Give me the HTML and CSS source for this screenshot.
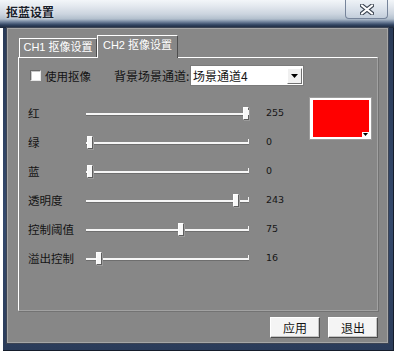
FILE: index.html
```html
<!DOCTYPE html>
<html>
<head>
<meta charset="utf-8">
<link rel="stylesheet" href="styles.css">
</head>
<body>
<div class="window">
  <div class="titlebar">
    <span class="title">抠蓝设置</span>
    <div class="close">
      <svg width="14" height="11" viewBox="0 0 14 11"><path d="M2 1.5 L12 9.5 M12 1.5 L2 9.5" stroke="#3a4350" stroke-width="4.2" stroke-linecap="round"/><path d="M2 1.5 L12 9.5 M12 1.5 L2 9.5" stroke="#ffffff" stroke-width="2.2" stroke-linecap="round"/></svg>
    </div>
  </div>
  <div class="frame">
    <div class="client">
      <div class="tabs">
        <div class="tab">CH1 抠像设置</div>
        <div class="tab active">CH2 抠像设置</div>
      </div>
      <div class="panel">
        <div class="toprow">
          <label class="check"><span class="box"></span><span>使用抠像</span></label>
          <span class="bglabel">背景场景通道:</span>
          <div class="combo">
            <span class="combo-text">场景通道4</span>
            <span class="combo-btn"><svg width="7" height="4" viewBox="0 0 7 4"><path d="M0 0 H7 L3.5 4 Z" fill="#000"/></svg></span>
          </div>
        </div>
        <div class="main">
          <div class="rows">
            <div class="row"><span class="label">红</span><div class="track"><span class="thumb" style="left:157px"></span></div><span class="val">255</span></div>
            <div class="row"><span class="label">绿</span><div class="track"><span class="thumb" style="left:1px"></span></div><span class="val">0</span></div>
            <div class="row"><span class="label">蓝</span><div class="track"><span class="thumb" style="left:1px"></span></div><span class="val">0</span></div>
            <div class="row"><span class="label">透明度</span><div class="track"><span class="thumb" style="left:147px"></span></div><span class="val">243</span></div>
            <div class="row"><span class="label">控制阈值</span><div class="track"><span class="thumb" style="left:92px"></span></div><span class="val">75</span></div>
            <div class="row"><span class="label">溢出控制</span><div class="track"><span class="thumb" style="left:10px"></span></div><span class="val">16</span></div>
          </div>
          <div class="swatch"><span class="swatch-arrow"><svg width="5" height="3" viewBox="0 0 5 3"><path d="M0 0 H5 L2.5 3 Z" fill="#000"/></svg></span></div>
        </div>
      </div>
      <div class="buttons">
        <button class="btn">应用</button>
        <button class="btn">退出</button>
      </div>
    </div>
  </div>
</div>
</body>
</html>
```

FILE: styles.css
```css
* { box-sizing: border-box; }
html, body { margin: 0; padding: 0; background: #ffffff; }
body {
  width: 400px;
  height: 356px;
  overflow: hidden;
  font-family: "Liberation Sans", "Noto Sans CJK SC", sans-serif;
  color: #141414;
}
.window {
  width: 394px;
  height: 350px;
  display: flex;
  flex-direction: column;
}
.titlebar {
  height: 28px;
  flex: none;
  display: flex;
  justify-content: space-between;
  align-items: flex-start;
  padding-left: 6px;
  padding-right: 6px;
  background: linear-gradient(to bottom, #f3f6f9 0px, #e4e9ef 6px, #ccd5df 14px, #b2bfcd 19px, #6e809a 22px, #2f4260 25px, #1c2638 28px);
}
.title {
  margin-top: 4px;
  font-family: "Noto Sans CJK SC", sans-serif;
  font-size: 12px;
  font-weight: bold;
  line-height: 16px;
  color: #18202a;
  text-shadow: 0 0 3px rgba(255,255,255,0.9);
}
.close {
  width: 43px;
  height: 19px;
  display: flex;
  align-items: center;
  justify-content: center;
  border: 1px solid #76849a;
  border-top: none;
  border-radius: 0 0 4px 4px;
  background: linear-gradient(to bottom, #eef2f6, #d6dee8 60%, #c3cedb);
}
.frame {
  flex: 1;
  margin-left: 3px;
  padding: 0 5px 7px 4px;
  background: linear-gradient(to bottom, #2a3b58, #34496c 60%, #2b3c5a);
  border-bottom: 1px solid #151d2b;
  border-right: 1px solid #151d2b;
}
.client {
  height: 315px;
  background: #878787;
  border: 1px solid #a6a6a6;
  box-shadow: 0 0 0 1px #3c4454;
  padding: 6px 10px 0 10px;
  display: flex;
  flex-direction: column;
}
.tabs {
  height: 22px;
  display: flex;
  align-items: flex-end;
  padding-left: 1px;
}
.tab {
  width: 78px;
  height: 19px;
  border: 1px solid #ffffff;
  border-bottom: none;
  border-right-color: #4e4e4e;
  color: #ffffff;
  font-size: 11px;
  line-height: 17px;
  text-align: center;
  font-family: "Liberation Sans", "Noto Sans CJK SC", sans-serif;
  white-space: nowrap;
}
.tab.active {
  width: 81px;
  height: 23px;
  margin-bottom: -1px;
  background: #878787;
  position: relative;
  z-index: 1;
  line-height: 18px;
}
.panel {
  width: 360px;
  height: 254px;
  border: 1px solid #ffffff;
  border-right-color: #a2a2a2;
  border-bottom-color: #a2a2a2;
  box-shadow: 1px 1px 0 #737373;
  padding: 7px 0 0 9px;
  font-size: 12px;
}
.toprow {
  height: 21px;
  display: flex;
  align-items: center;
}
.check {
  width: 84px;
  margin-left: 2px;
  display: flex;
  align-items: center;
  font-family: "Noto Sans CJK SC", sans-serif;
  font-size: 11.5px;
}
.box {
  width: 11px;
  height: 11px;
  margin-right: 4px;
  background: #ffffff;
  border: 1px solid #6a6a6a;
  border-right-color: #e6e6e6;
  border-bottom-color: #e6e6e6;
  box-shadow: inset 1px 1px 0 #c8c8c8;
}
.bglabel {
  width: 76px;
  font-family: "Noto Sans CJK SC", sans-serif;
  font-size: 12px;
  white-space: nowrap;
}
.combo {
  width: 114px;
  height: 21px;
  display: flex;
  align-items: center;
  justify-content: space-between;
  background: #ffffff;
  border: 1px solid #7a7a7a;
  box-shadow: inset 0 0 0 1px #ffffff;
  padding: 1px 1px 1px 2px;
}
.combo-text {
  font-family: "Noto Sans CJK SC", sans-serif;
  font-size: 12px;
  line-height: 16px;
}
.combo-btn {
  width: 15px;
  height: 16px;
  display: flex;
  align-items: center;
  justify-content: center;
  background: #f0f0f0;
  border: 1px solid #ffffff;
  border-right-color: #707070;
  border-bottom-color: #707070;
}
.main {
  margin-top: 12px;
  display: flex;
  align-items: flex-start;
}
.rows {
  width: 282px;
  display: flex;
  flex-direction: column;
}
.row {
  height: 29px;
  display: flex;
  align-items: center;
}
.label {
  width: 58px;
  font-family: "Noto Sans CJK SC", sans-serif;
  font-size: 11.5px;
  white-space: nowrap;
}
.track {
  width: 163px;
  height: 2px;
  margin-top: 2px;
  position: relative;
  background: #f6f6f6;
  box-shadow: 0 1px 0 #6e6e6e;
}
.track::after {
  content: "";
  position: absolute;
  right: 0;
  bottom: 0;
  width: 1px;
  height: 5px;
  background: #f6f6f6;
}
.thumb {
  position: absolute;
  top: -6px;
  width: 6px;
  height: 13px;
  background: #f8f8f8;
  border: 1px solid #ffffff;
  border-right-color: #5e5e5e;
  border-bottom-color: #5e5e5e;
  box-shadow: 1px 1px 0 #9a9a9a;
}
.val {
  margin-left: 17px;
  font-family: "DejaVu Sans", sans-serif;
  font-size: 9.5px;
  color: #161616;
}
.swatch {
  width: 61px;
  height: 41px;
  border: 2px solid #ffffff;
  border-left-width: 3px;
  background: #ff0000;
  box-shadow: 0 0 0 1px #9c9c9c;
  display: flex;
  align-items: flex-end;
  justify-content: flex-end;
}
.swatch-arrow {
  width: 7px;
  height: 5px;
  background: #ffffff;
  display: flex;
  align-items: center;
  justify-content: center;
}
.buttons {
  margin-top: 6px;
  width: 360px;
  display: flex;
  justify-content: flex-end;
  gap: 8px;
}
.btn {
  width: 50px;
  height: 21px;
  padding: 0;
  margin: 0;
  font-family: "Noto Sans CJK SC", sans-serif;
  font-size: 12px;
  color: #141414;
  background: #f4f4f4;
  border: 1px solid #ffffff;
  border-right-color: #4c4c4c;
  border-bottom-color: #4c4c4c;
  box-shadow: inset -1px -1px 0 #c4c4c4;
}
```
